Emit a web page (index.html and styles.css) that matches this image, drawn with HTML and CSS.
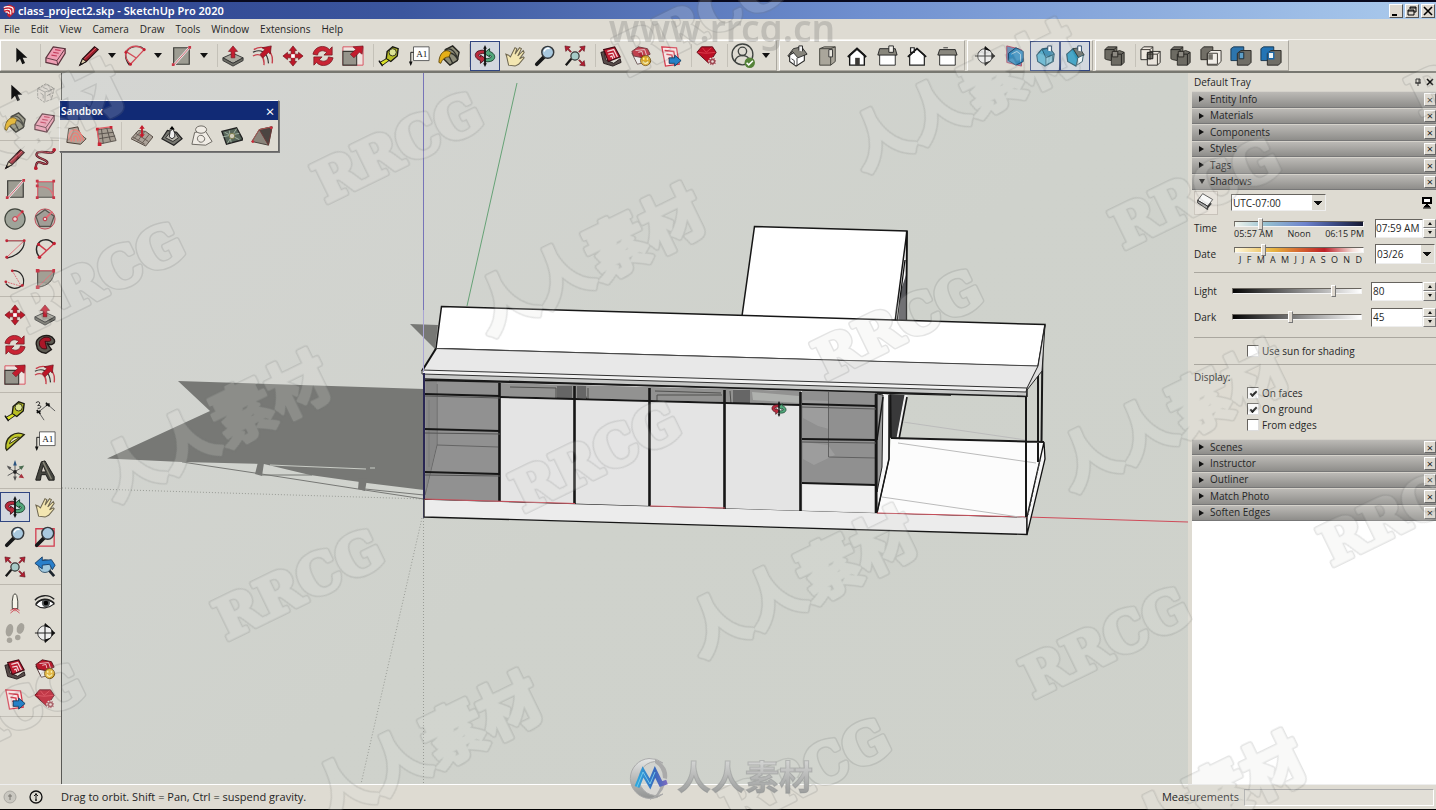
FILE: index.html
```html
<!DOCTYPE html>
<html lang="en">
<head>
<meta charset="utf-8">
<title>class_project2.skp - SketchUp Pro 2020</title>
<link rel="stylesheet" href="styles.css">
</head>
<body>
<svg class="defs" aria-hidden="true">
<defs>
<linearGradient id="silver" x1="0" y1="0" x2="0" y2="1"><stop offset="0" stop-color="#e6e7e6"/><stop offset=".5" stop-color="#b9bab9"/><stop offset="1" stop-color="#929493"/></linearGradient>
<linearGradient id="wave" x1="0" y1="0" x2="1" y2="0"><stop offset="0" stop-color="#2fa6dc"/><stop offset=".6" stop-color="#3868bd"/><stop offset="1" stop-color="#7b6bc0"/></linearGradient>
<linearGradient id="ground" x1="0" y1="0" x2="1" y2="1"><stop offset="0" stop-color="#d4d5d2"/><stop offset=".35" stop-color="#cfd2cc"/><stop offset="1" stop-color="#ced1ca"/></linearGradient>
</defs>
<symbol id="logo" viewBox="0 0 24 24"><path d="M3 5 13 1l9 4v9l-9 9-4-3v-4l-6-3z" fill="#c8202f"/><path d="M3 6c7-3 16-1 16 3v6M4 10c6-2 11-1 11 3v5M6 14c4-1 6 0 6 3" fill="none" stroke="#fff" stroke-width="2"/></symbol>
<symbol id="select" viewBox="0 0 24 24"><path d="M8 3v16l4-4 2.500 6 3-1.300-2.600-5.700H20z" fill="#111"/></symbol>
<symbol id="eraser" viewBox="0 0 24 24"><path d="M9 2 22 4v5l-8 13L1 19v-5z" fill="#ee9fb4" stroke="#59333c" stroke-width="1.300"/><path d="m1 14 12 3 9-13M13 17l1 5" fill="none" stroke="#59333c"/><path d="m11 5 6 1M9 8l6 1M7 11l6 1" stroke="#c23b5a" stroke-width="1.200"/></symbol>
<symbol id="pencil" viewBox="0 0 24 24"><path d="m2 22 3-7L18 2l4 3L9 18z" fill="#9c1d2b" stroke="#2b1013" stroke-width="1.300"/><path d="M7 15 20 3" stroke="#e0606a"/><path d="m2 22 3-7 4 3z" fill="#d8c6a5" stroke="#111"/><path d="m2 22 1-3 2 2z" fill="#111"/></symbol>
<symbol id="arc" viewBox="0 0 24 24"><path d="M2 9C5 1 17-1 22 5M2 9c-1 5 1 9 4 13" fill="none" stroke="#282828" stroke-width="1.500"/><path d="M2 7C8 0 15 0 22 5L7 21C3 17 1 12 2 7l11 7" fill="none" stroke="#d34b58" stroke-width="1.400"/><g fill="#c41f31"><circle cx="22" cy="5" r="1.700"/><circle cx="7" cy="21" r="1.700"/><circle cx="2" cy="8" r="1.500"/></g></symbol>
<symbol id="rect" viewBox="0 0 24 24"><path d="M4 3h17v18H4z" fill="#9d9c92" stroke="#3c3c38" stroke-width="1.300"/><path d="M4 22 22 2" stroke="#eee" stroke-width="2.500"/><path d="M4 22 22 2" stroke="#ce5460"/><path d="M20 1h3v3h-3zM2 20h3v3H2z" fill="#c73747"/></symbol>
<symbol id="rotrect" viewBox="0 0 24 24"><path d="M4 4h17v17H4z" fill="#a4a198" stroke="#494942"/><path d="M4 21V2M4 4h17v17M4 10c9-2 16 2 17 11" fill="none" stroke="#e56c77" stroke-width="1.200"/><path d="M2 2h3v3H2zM2 7h3v3H2zM20 2h3v3h-3zM2 20h3v3H2zM20 20h3v3h-3z" fill="#c73747"/></symbol>
<symbol id="circle" viewBox="0 0 24 24"><circle cx="12" cy="12" r="11" fill="#9fa49a" stroke="#42463e" stroke-width="1.300"/><path d="m12 12 8-8" stroke="#e36a73" stroke-width="2"/><circle cx="12" cy="12" r="2.500" fill="#f0d5d4" stroke="#bc2436"/><circle cx="20" cy="4" r="1.500" fill="#bc2436"/></symbol>
<symbol id="polygon" viewBox="0 0 24 24"><circle cx="12" cy="12" r="11" fill="#b9b4ac" stroke="#c34351"/><path d="m12 2 10 7-4 11H6L2 9z" fill="#a19e97" stroke="#55524d" stroke-width="1.300"/><path d="m12 12 8-8" stroke="#e36a73" stroke-width="2"/><circle cx="12" cy="12" r="2" fill="#f3d1d2" stroke="#bc2436"/></symbol>
<symbol id="arc3" viewBox="0 0 24 24"><path d="M3 3h19C23 13 13 20 3 22" fill="none" stroke="#222" stroke-width="1.300"/><path d="M3 3h19L3 21" fill="none" stroke="#df6973"/><g fill="#be2637"><circle cx="3" cy="3" r="1.600"/><circle cx="22" cy="3" r="1.600"/><circle cx="3" cy="21" r="1.600"/></g></symbol>
<symbol id="arc2" viewBox="0 0 24 24"><path d="M6 21C-1 12 4 2 13 2q5 0 9 5" fill="none" stroke="#282828" stroke-width="1.600"/><path d="M6 21 22 6M5 7l9 7" stroke="#ce3c4b" stroke-width="1.500"/><g fill="#c41f31"><circle cx="22" cy="6" r="1.900"/><circle cx="6" cy="21" r="1.900"/><circle cx="5" cy="7" r="1.700"/></g></symbol>
<symbol id="arccenter" viewBox="0 0 24 24"><path d="M9 3c8-1 14 6 12 15-8 7-15 4-19-1" fill="none" stroke="#252525" stroke-width="1.300"/><path d="m9 3 10 17L2 15" fill="none" stroke="#db6470" stroke-dasharray="2 1"/><g fill="#be2637"><circle cx="9" cy="3" r="1.500"/><circle cx="2" cy="15" r="1.500"/><circle cx="20" cy="19" r="1.500"/></g></symbol>
<symbol id="pie" viewBox="0 0 24 24"><path d="M4 3h18c0 10-7 17-18 18z" fill="#a29f94" stroke="#3a3935"/><path d="M3 3h19L4 21" fill="none" stroke="#e46e78"/><path d="M2 1h4v4H2zM20 1h3v4h-3zM2 19h4v4H2z" fill="#c73747"/></symbol>
<symbol id="freehand" viewBox="0 0 24 24"><path d="M2 22c0-13 9-2 12-5 4-4-14-6-11-11S22 9 22 2" fill="none" stroke="#4b1720" stroke-width="2.500"/><path d="M2 22c0-13 9-2 12-5 4-4-14-6-11-11S22 9 22 2" fill="none" stroke="#d45b68" stroke-width="1"/><circle cx="2" cy="22" r="2" fill="#bb1c2e"/><circle cx="22" cy="2" r="2" fill="#bb1c2e"/></symbol>
<symbol id="pushpull" viewBox="0 0 24 24"><path d="m1 14 11-5 11 5-11 6z" fill="#aaa99f" stroke="#333"/><path d="m1 14 11 6 11-6v3l-11 6-11-6z" fill="#6d6d65" stroke="#333"/><path d="m12 1 5 6h-3v7h-4V7H7z" fill="#c51e31" stroke="#791420" stroke-width=".7"/></symbol>
<symbol id="offset" viewBox="0 0 24 24"><path d="M2 5C12-1 24 5 22 20M1 12c8-4 13 1 12 10" fill="none" stroke="#c7404c" stroke-width="1.500"/><path d="M1 8c8-4 16-1 17 12" fill="none" stroke="#333" stroke-width="1.300"/><path d="m21 1-1 9-2-2-6 6-3-4 5-5-3-2z" fill="#bd1628" stroke="#641019" stroke-width=".7"/></symbol>
<symbol id="move" viewBox="0 0 24 24"><path d="m12 1 4 5h-2v4h4V8l5 4-5 4v-2h-4v4h2l-4 5-4-5h2v-4H6v2l-5-4 5-4v2h4V6H8z" fill="#bd1829" stroke="#6d111a" stroke-width=".7"/><path d="M10 10h4v4h-4z" fill="#fff"/></symbol>
<symbol id="rotate" viewBox="0 0 24 24"><path d="M1 10C3 1 14-1 19 5l3-3v9h-9l3-3C12 5 7 6 6 11zM23 14c-2 9-13 11-18 5l-3 3v-9h9l-3 3c4 3 9 2 10-3z" fill="#c92434" stroke="#721620" stroke-width=".8"/></symbol>
<symbol id="scale" viewBox="0 0 24 24"><path d="M1 2h22v20H1z" fill="#eee3df" stroke="#d84c5b"/><path d="M1 7h15v15H1z" fill="#96948b" stroke="#3b3934" stroke-width="1.200"/><path d="m23 1-1 9-3-2-6 6-4-4 6-5-3-3z" fill="#c21b2d" stroke="#5d131b" stroke-width=".6"/></symbol>
<symbol id="followme" viewBox="0 0 24 24"><path d="M3 13C-1 3 17-3 22 6c2 5-4 7-8 4l5 7-6 4C7 20 3 17 3 13z" fill="#5d5b52" stroke="#201c1a" stroke-width="1.500"/><path d="M6 12C4 5 14 1 18 5c2 4-4 3-6 3l2 8c-5 1-7-1-8-4z" fill="#aa1728" stroke="#3c0b11"/></symbol>
<symbol id="tape" viewBox="0 0 24 24"><path d="m10 7 6-5 6 2-1 8-7 6-5-3z" fill="#b8be25" stroke="#161611" stroke-width="1.500"/><circle cx="16" cy="8" r="4" fill="#dce394" stroke="#282815"/><path d="m9 15 3 2-7 5-3-3z" fill="#dae127" stroke="#151512"/><path d="m1 17 4 6" stroke="#111" stroke-width="1.500"/></symbol>
<symbol id="text" viewBox="0 0 24 24"><path d="M6 2h17v15H6z" fill="#fff" stroke="#555"/><text x="9" y="13" class="glyph-text">A1</text><path d="M6 8H3v13" fill="none" stroke="#111"/><path d="m1 18 2 5 2-5z" fill="#111"/></symbol>
<symbol id="paint" viewBox="0 0 24 24"><path d="m8 5 8-4 7 7-2 9-8 5-7-7z" fill="#8d8c78" stroke="#252520" stroke-width="1.500"/><path d="M8 5c7-3 11 3 14 11M7 15c4-9 10-7 14 0M9 6l7 14" fill="none" stroke="#2f302a" stroke-width="1.400"/><path d="M14 8C8 3 1 9 1 19l2 1c2-5 5-7 9-7z" fill="#e5af18" stroke="#644a0c"/></symbol>
<symbol id="orbit" viewBox="0 0 24 24"><path d="M12 6C0 4-2 14 7 17v3l6-5-6-4v2c-4-2-1-4 5-4z" fill="#ba2b3d" stroke="#44131b"/><path d="M12 18c12 2 14-8 5-11V4l-6 5 6 4v-2c4 2 1 4-5 4z" fill="#52a77b" stroke="#153d28"/><path d="m12 0 2 4h-1v16h1l-2 4-2-4h1V4h-1z" fill="#151515"/></symbol>
<symbol id="hand" viewBox="0 0 24 24"><path d="M5 22 3 13l-1-3 3 1 2 2 5-10 2 1-2 6 5-7 2 1-4 8 6-6 1 2-5 7 4-2 1 1-6 7-4 2z" fill="#f3e6b1" stroke="#6d654e" stroke-width="1.100"/></symbol>
<symbol id="zoom" viewBox="0 0 24 24"><path d="m3 21 8-8" stroke="#171819" stroke-width="4" stroke-linecap="round"/><circle cx="15" cy="8" r="6.500" fill="#a9c9df" stroke="#34383c" stroke-width="1.600"/><path d="M11 7c1-3 4-4 6-3" stroke="#fff" stroke-width="1.500" fill="none"/></symbol>
<symbol id="zoomwin" viewBox="0 0 24 24"><path d="M2 3h20v19H2z" fill="none" stroke="#d23b4d" stroke-width="1.400"/><path d="m3 21 8-8" stroke="#171819" stroke-width="4" stroke-linecap="round"/><circle cx="15" cy="8" r="6.500" fill="#a9c9df" stroke="#34383c" stroke-width="1.600"/></symbol>
<symbol id="extents" viewBox="0 0 24 24"><path d="m8 15-6 7" stroke="#161616" stroke-width="2.500"/><circle cx="12" cy="12" r="4.500" fill="#a7cbc7" stroke="#333" stroke-width="1.300"/><path d="m1 1 6 1-2 2 3 3-1 1-3-3-2 2zM23 1l-6 1 2 2-3 3 1 1 3-3 2 2zM23 23l-6-1 2-2-3-3 1-1 3 3 2-2z" fill="#b21c30" stroke="#541019" stroke-width=".6"/></symbol>
<symbol id="previous" viewBox="0 0 24 24"><path d="m15 14 7 8" stroke="#1d242c" stroke-width="3"/><circle cx="12" cy="11" r="7" fill="#a1c8dd" stroke="#31526c"/><path d="m1 8 8-7v4l10-1 4 6-3 5-3-6-8 1v4z" fill="#297fca" stroke="#193e68"/></symbol>
<symbol id="warehouse" viewBox="0 0 24 24"><path d="m1 8 4-1 1 9 9 4 7-5 1 4-9 4-10-3z" fill="#574b49" stroke="#211819"/><path d="m4 5 12-3 6 11-13 5z" fill="#bd1c30" stroke="#420c15" stroke-width="1.300"/><path d="m8 7 7-2 4 8M9 10l5-1 2 5M11 13l2-1 1 3" fill="none" stroke="#f4d9dc" stroke-width="1.300"/></symbol>
<symbol id="share" viewBox="0 0 24 24"><path d="m2 9 6 12 8-2-2-9z" fill="#eee" stroke="#4e3434"/><path d="m2 7 7-5 10 2 3 6-8 4L4 12z" fill="#b81a2c" stroke="#4e1118"/><path d="m6 6 10-1 2 6M9 8l4-1 1 4" fill="none" stroke="#eccbd0"/><circle cx="17" cy="17" r="5.500" fill="#e4ae22" stroke="#674708"/><path d="M14 18q3 4 6 0M15 14v2M19 14v2" fill="none" stroke="#fff6a9" stroke-width="1.500"/></symbol>
<symbol id="layout" viewBox="0 0 24 24"><path d="m2 2 16 1 3 18-15 2z" fill="#fae7e7" stroke="#d53a4c" stroke-width="1.400"/><path d="m5 6 10 1 2 10M7 10l6 1 1 7M9 14l2 1v5" fill="none" stroke="#d53a4c" stroke-width="1.600"/><path d="M10 14h6v-3l7 6-7 6v-3h-6z" fill="#2581c7" stroke="#123b5e"/></symbol>
<symbol id="gem" viewBox="0 0 24 24"><path d="m1 8 5-6h12l4 6-8 12z" fill="#b90f24" stroke="#5c0713"/><path d="m2 8 9 1 10-1M7 3l4 5 6-5" fill="none" stroke="#dd3d4d"/><circle cx="18" cy="18" r="4" fill="#9d4751" stroke="#e8dfda" stroke-dasharray="2 1" stroke-width="1.500"/><circle cx="18" cy="18" r="1.400" fill="#eadbd7"/></symbol>
<symbol id="user" viewBox="0 0 24 24"><g fill="none" stroke="#3f4340" stroke-width="1.300"><circle cx="11" cy="11" r="10"/><circle cx="11" cy="8" r="4"/><path d="M4 18c0-8 14-8 14 0"/></g><circle cx="18" cy="19" r="5" fill="#548238"/><path d="m15 19 2 2 4-4" fill="none" stroke="#fff" stroke-width="1.500"/></symbol>
<symbol id="iso" viewBox="0 0 24 24"><path d="M4 11v7l7 5 9-6v-7L9 8z" fill="#fff" stroke="#282827" stroke-width="1.200"/><path d="m2 12 6-8 9-2 6 8-10 4-6-7-4 6z" fill="#87857c" stroke="#292927"/><path d="M14 6V1h4v6" fill="#eee" stroke="#222"/><path d="M12 14v9M6 15l3 2v4" fill="none" stroke="#333"/></symbol>
<symbol id="topview" viewBox="0 0 24 24"><path d="m4 4 5-2h12v16l-5 4H4z" fill="#aaa69b" stroke="#403e39"/><path d="M4 4h12l5-2M16 4v18" fill="none" stroke="#403e39"/><path d="M14 5h4v8h-4z" fill="#e8e6de" stroke="#333"/></symbol>
<symbol id="front" viewBox="0 0 24 24"><path d="M4 11v11h16V11l-8-7z" fill="#fff" stroke="#171717" stroke-width="1.500"/><path d="m2 13 10-9 10 9" fill="none" stroke="#171717" stroke-width="2.200"/><path d="M10 14h5v8h-5z" fill="#3b3935"/></symbol>
<symbol id="right" viewBox="0 0 24 24"><path d="M4 10h17v12H4z" fill="#fff" stroke="#222"/><path d="m2 11 2-7h17l2 7z" fill="#88867c" stroke="#222"/><path d="M14 1h5v7h-5z" fill="#f1efe9" stroke="#222"/></symbol>
<symbol id="back" viewBox="0 0 24 24"><path d="M5 3h4v5H5zM4 11v11h16V11l-8-7z" fill="#fff" stroke="#222" stroke-width="1.300"/><path d="m2 13 10-9 10 9" fill="none" stroke="#191919" stroke-width="2"/></symbol>
<symbol id="left" viewBox="0 0 24 24"><path d="M4 10h17v12H4z" fill="#fff" stroke="#222"/><path d="m2 11 2-6h17l2 6z" fill="#89877e" stroke="#222"/><path d="M8 3h5" stroke="#333"/></symbol>
<symbol id="section" viewBox="0 0 24 24"><circle cx="12" cy="12" r="8" fill="#eee" stroke="#333"/><path d="M1 12h22M12 2v20" stroke="#222" stroke-width="1.200"/><path d="m12 1 7 6-7-2zM12 23l7-6-7 2zM19 8l4 4-4 4z" fill="#111"/></symbol>
<symbol id="sectionplane" viewBox="0 0 24 24"><path d="m3 1 16 4v18L3 19z" fill="#6b91b9" stroke="#b64c65"/><path d="m5 9 8-6 8 4v11l-8 4-8-5z" fill="#318cc2" stroke="#173f61"/><path d="m8 10 6-3 4 3v8" fill="none" stroke="#acd1e4"/></symbol>
<symbol id="cutfill" viewBox="0 0 24 24"><path d="m3 11 6-7 8-1 5 7-1 8-9 5-8-5z" fill="#58b3d3" stroke="#215268" stroke-width="1.200"/><path d="m9 5 8-2 5 7-9 4z" fill="#4795b9" stroke="#1c536c"/><path d="M15 6V1h4v6" fill="#fff" stroke="#246"/><path d="m13 14 7-3v7l-7 4z" fill="#8ecbe0" stroke="#265b70"/></symbol>
<symbol id="cutplane" viewBox="0 0 24 24"><path d="m3 10 7-6 6 9-3 10-9-5z" fill="#2499c3" stroke="#164b61" stroke-width="1.300"/><path d="m10 4 7-1 5 8-6 3z" fill="#777c78" stroke="#34423f"/><path d="m15 14 6-3-1 7-6 4z" fill="#eef5f7" stroke="#345c69"/><path d="M15 6V1h4v6" fill="#fff" stroke="#246"/></symbol>
<symbol id="shell" viewBox="0 0 24 24"><path d="m1 5 3-3h10v5l3-1 5 2v11l-3 3H8v-5l-5-1-2-1z" fill="#6d6b63" stroke="#2f2e2a"/><path d="M1 5h10v5M8 10h11v12M8 10v7M19 10l3-2M11 5l3-3" fill="none" stroke="#21201e"/><path d="M9 7h6v6H9z" fill="#8d8a82" stroke="#282622"/></symbol>
<symbol id="intersect" viewBox="0 0 24 24"><path d="m1 5 3-3h10v10l-3 4H1z" fill="#eee8df" stroke="#252422"/><path d="m8 10 3-3h11v12l-3 3H8z" fill="#eee8df" fill-opacity=".7" stroke="#252422"/><path d="M8 8h6v7H8z" fill="#76736c" stroke="#111"/><path d="M1 5h10v11M11 5l3-3M8 10h11v12M19 10l3-3" fill="none" stroke="#33302c"/></symbol>
<symbol id="subtract" viewBox="0 0 24 24"><path d="m1 5 3-3h10v12l-3 2H1z" fill="#726f67" stroke="#282622"/><path d="m8 9 4-3h11v12l-4 4H8z" fill="#f1eee8" stroke="#35322d"/><path d="M8 9h11v12M8 9v12h11" fill="none" stroke="#35322d"/><path d="M9 10h5v6H9z" fill="#716f68"/></symbol>
<symbol id="trim" viewBox="0 0 24 24"><path d="m1 4 3-2h11v13l-3 2H1z" fill="#2d75ad" stroke="#16334b"/><path d="m8 9 4-3h11v13l-3 3H8z" fill="#706e66" stroke="#292724"/><path d="M10 8h5v7h-5z" fill="#5e9ec6" stroke="#172b3a"/></symbol>
<symbol id="split" viewBox="0 0 24 24"><path d="m1 4 3-2h11v13l-3 2H1z" fill="#2374b5" stroke="#16334b"/><path d="m8 9 4-3h11v13l-3 3H8z" fill="#706e66" stroke="#292724"/><path d="M9 8h6v7H9z" fill="#eef5f7" stroke="#1a66a7" stroke-width="1.500"/></symbol>
<symbol id="component" viewBox="0 0 24 24"><path d="m4 7 9-5 9 5-3 12-8 3-7-5z" fill="#ddd8d0" stroke="#969590" stroke-dasharray="3 1"/><path d="m4 7 8 4 10-4M12 11v10M7 12l3 2v4M15 11l4-2M14 15l4-2M10 6l5 2" stroke="#969590" fill="none"/></symbol>
<symbol id="dimension" viewBox="0 0 24 24"><path d="m5 13 10-8M5 13l6 9M15 5l8 7" fill="none" stroke="#555"/><path d="m3 11 4 4M13 3l4 4M3 14l4-2M13 6l4-2" stroke="#111" stroke-width="1.800"/><path d="M2 3c4-3 6 1 2 3 5-1 4 4 0 3" fill="none" stroke="#222"/></symbol>
<symbol id="protractor" viewBox="0 0 24 24"><path d="M2 20C1 8 12 0 22 5L3 22z" fill="#bfc629" stroke="#272714" stroke-width="1.500"/><path d="M6 15c1-5 6-8 11-7z" fill="#eee8c6" stroke="#272714"/></symbol>
<symbol id="axes" viewBox="0 0 24 24"><path d="M12 3v18M4 8l16 10M4 17l16-9" stroke="#555"/><path d="m12 0-2 6h4z" fill="#2b5480"/><path d="m3 6 3 5 2-3zM12 23l-2-5h4z" fill="#555"/><path d="m22 20-6-1 3-4z" fill="#a8323e"/><path d="m22 6-6 1 3 4z" fill="#4b6c50"/><circle cx="12" cy="13" r="2" fill="#222"/></symbol>
<symbol id="text3d" viewBox="0 0 24 24"><path d="m2 21 6-19 4-1 10 17v4h-6l-3-6H8l-1 6H2z" fill="#464640" stroke="#171715"/><path d="m8 13 2-7 3 7z" fill="#ded6cd" stroke="#20201c"/><path d="m10 2 9 19" stroke="#8b8979" stroke-width="1.500"/></symbol>
<symbol id="camera" viewBox="0 0 24 24"><path d="m9 10 1-6q2-4 4 0l1 6v8H9z" fill="#f6f4e9" stroke="#393933"/><path d="M12 18v3M7 20l5-2 5 2M7 23l5-4 5 4" fill="none" stroke="#cf4e59"/></symbol>
<symbol id="eye" viewBox="0 0 24 24"><path d="M2 14C6 7 16 6 22 13c-6 5-14 6-20 1z" fill="#fff" stroke="#222" stroke-width="1.300"/><circle cx="13" cy="12" r="4.500" fill="#55595a"/><circle cx="13" cy="12" r="2.500"/><path d="M1 9c5-6 15-7 21-1M2 13c5-6 13-7 20-1" fill="none" stroke="#222" stroke-width="1.600"/></symbol>
<symbol id="walk" viewBox="0 0 24 24"><g fill="#a6a39b"><ellipse cx="6" cy="9" rx="4" ry="7" transform="rotate(12 6 9)"/><ellipse cx="6" cy="20" rx="3" ry="3"/><ellipse cx="18" cy="7" rx="4" ry="6" transform="rotate(18 18 7)"/><ellipse cx="15" cy="17" rx="3" ry="3"/></g></symbol>
<symbol id="tosurface" viewBox="0 0 24 24"><path d="m4 4 10-2c2 8 4 9 9 13l-6 6-15-2z" fill="#b3a498" stroke="#42372e"/><g fill="none" stroke="#f07f78" stroke-width="1.500"><path d="M4 16C3 2 17 1 20 17M7 18C4 6 16 5 17 18M10 18c-2-8 4-8 4 0"/></g></symbol>
<symbol id="scratch" viewBox="0 0 24 24"><path d="m3 5 15-2 5 14-19 4z" fill="#a59d92" stroke="#57504a"/><path d="m7 4 2 16M13 4l4 14M3 10l17-2M4 15l18-3" stroke="#554f49"/><path d="M2 4 17 2M2 4l3 17" stroke="#e15e66" stroke-width="1.400"/><path d="M1 3h3v3H1zM16 1h3v3h-3zM3 19h4v4H3z" fill="#cd2334"/></symbol>
<symbol id="smoove" viewBox="0 0 24 24"><path d="m0 15 8-9 8 1 8 6-8 10z" fill="#aaa198" stroke="#51473f"/><path d="m3 15 8-8M7 18l8-11M12 20l8-10M5 9l14 9M2 13l13 8" stroke="#625850"/><path d="m12 0 3 4h-2v6h2l-3 4-3-4h2V4H9z" fill="#c31c2d"/></symbol>
<symbol id="stamp" viewBox="0 0 24 24"><path d="m1 15 6-9 10 2 6 7-9 7z" fill="#777770" stroke="#222" stroke-width="1.300"/><path d="m5 14 4-5h7l3 5-6 4z" fill="#b8b6ad" stroke="#282828"/><path d="m9 13 1-6 3-3 2 5v4l-3 2z" fill="#eee" stroke="#222"/><path d="m12 1 3 4H9z"/></symbol>
<symbol id="drape" viewBox="0 0 24 24"><g fill="#f0ece5" stroke="#64605a"><path d="m4 8 12-1 7 11-7 4-15-1z"/><ellipse cx="11" cy="5" rx="6" ry="4"/><path d="M7 15c0-5 7-5 8 0 0 4-7 6-8 0z"/></g></symbol>
<symbol id="detail" viewBox="0 0 24 24"><path d="m1 7 16-4 7 13-18 5z" fill="#57665a" stroke="#222" stroke-width="1.500"/><path d="m4 8 16 8M17 4 7 20M9 6l2 13M2 13l18-4" stroke="#a5b5a4"/><circle cx="12" cy="12" r="3" fill="#cfcbbb" stroke="#774"/></symbol>
<symbol id="flip" viewBox="0 0 24 24"><path d="m1 18 8-13 14-3-4 20z" fill="#8a847a" stroke="#443e38"/><path d="m9 5 10 17 4-20z" fill="#4b4541" stroke="#6f3837"/><path d="m1 18 8-13 14-3" fill="none" stroke="#b05a55"/><circle cx="2" cy="18" r="1.500" fill="#c92c3a"/><circle cx="22" cy="3" r="1.500" fill="#c92c3a"/></symbol>
</svg>

<div class="app">
<header class="titlebar"><svg class="app-logo"><use href="#logo"/></svg><h1>class_project2.skp - SketchUp Pro 2020</h1>
<div class="window-controls"><button aria-label="Minimize"><svg viewBox="0 0 10 10"><path d="M1 9h5" stroke="#000" stroke-width="2"/></svg></button><button aria-label="Restore"><svg viewBox="0 0 10 10"><path d="M3 1h6v5H7M3 3V1M1 4h6v5H1zM1 5h6M3 2h6" fill="none" stroke="#000"/></svg></button><button aria-label="Close"><svg viewBox="0 0 10 10"><path d="m1 1 8 8M9 1 1 9" stroke="#000" stroke-width="1.600"/></svg></button></div></header>
<nav class="menu" aria-label="Menu"><button>File</button><button>Edit</button><button>View</button><button>Camera</button><button>Draw</button><button>Tools</button><button>Window</button><button>Extensions</button><button>Help</button></nav>
<div class="toolbar" role="toolbar" aria-label="Getting started">
<div class="band">
<div class="group"><button class="tool" aria-label="Select"><svg><use href="#select"/></svg></button></div>
<div class="group drawing"><button class="tool" aria-label="Eraser"><svg><use href="#eraser"/></svg></button><div class="split"><button class="tool" aria-label="Line"><svg><use href="#pencil"/></svg></button><button class="drop" aria-label="Line options"></button></div><div class="split"><button class="tool" aria-label="Arc"><svg><use href="#arc"/></svg></button><button class="drop" aria-label="Arc options"></button></div><div class="split"><button class="tool" aria-label="Rectangle"><svg><use href="#rect"/></svg></button><button class="drop" aria-label="Shape options"></button></div></div>
<div class="group"><button class="tool" aria-label="Push/Pull"><svg><use href="#pushpull"/></svg></button><button class="tool" aria-label="Offset"><svg><use href="#offset"/></svg></button><button class="tool" aria-label="Move"><svg><use href="#move"/></svg></button><button class="tool" aria-label="Rotate"><svg><use href="#rotate"/></svg></button><button class="tool" aria-label="Scale"><svg><use href="#scale"/></svg></button></div>
<div class="group"><button class="tool" aria-label="Tape measure"><svg><use href="#tape"/></svg></button><button class="tool" aria-label="Text"><svg><use href="#text"/></svg></button><button class="tool" aria-label="Paint bucket"><svg><use href="#paint"/></svg></button></div>
<div class="group"><button class="tool active" aria-label="Orbit"><svg><use href="#orbit"/></svg></button><button class="tool" aria-label="Pan"><svg><use href="#hand"/></svg></button><button class="tool" aria-label="Zoom"><svg><use href="#zoom"/></svg></button><button class="tool" aria-label="Zoom extents"><svg><use href="#extents"/></svg></button></div>
<div class="group"><button class="tool" aria-label="3D Warehouse"><svg><use href="#warehouse"/></svg></button><button class="tool" aria-label="Share model"><svg><use href="#share"/></svg></button><button class="tool" aria-label="Send to LayOut"><svg><use href="#layout"/></svg></button></div>
<div class="group"><button class="tool" aria-label="Extension Warehouse"><svg><use href="#gem"/></svg></button></div>
<div class="group"><div class="split"><button class="tool" aria-label="Account"><svg class="large"><use href="#user"/></svg></button><button class="drop" aria-label="Account options"></button></div></div>
</div>
<div class="band"><div class="group"><button class="tool" aria-label="Iso"><svg><use href="#iso"/></svg></button><button class="tool" aria-label="Top"><svg><use href="#topview"/></svg></button><button class="tool" aria-label="Front"><svg><use href="#front"/></svg></button><button class="tool" aria-label="Right"><svg><use href="#right"/></svg></button><button class="tool" aria-label="Back"><svg><use href="#back"/></svg></button><button class="tool" aria-label="Left"><svg><use href="#left"/></svg></button></div></div>
<div class="band"><div class="group"><button class="tool" aria-label="Section plane"><svg><use href="#section"/></svg></button><button class="tool" aria-label="Display section planes"><svg><use href="#sectionplane"/></svg></button><button class="tool active" aria-label="Display section cuts"><svg><use href="#cutfill"/></svg></button><button class="tool active" aria-label="Display section fill"><svg><use href="#cutplane"/></svg></button></div></div>
<div class="band"><div class="group"><button class="tool" aria-label="Outer shell"><svg><use href="#shell"/></svg></button></div><div class="group"><button class="tool" aria-label="Intersect"><svg><use href="#intersect"/></svg></button><button class="tool" aria-label="Union"><svg><use href="#shell"/></svg></button><button class="tool" aria-label="Subtract"><svg><use href="#subtract"/></svg></button><button class="tool" aria-label="Trim"><svg><use href="#trim"/></svg></button><button class="tool" aria-label="Split"><svg><use href="#split"/></svg></button></div></div>
</div>

<div class="workspace">
<aside class="toolset" aria-label="Large tool set">
<div class="tool-group"><button class="tool" aria-label="Select"><svg><use href="#select"/></svg></button><button class="tool" aria-label="Make component"><svg><use href="#component"/></svg></button><button class="tool" aria-label="Paint"><svg><use href="#paint"/></svg></button><button class="tool" aria-label="Eraser"><svg><use href="#eraser"/></svg></button></div>
<div class="tool-group"><button class="tool" aria-label="Line"><svg><use href="#pencil"/></svg></button><button class="tool" aria-label="Freehand"><svg><use href="#freehand"/></svg></button><button class="tool" aria-label="Rectangle"><svg><use href="#rect"/></svg></button><button class="tool" aria-label="Rotated rectangle"><svg><use href="#rotrect"/></svg></button><button class="tool" aria-label="Circle"><svg><use href="#circle"/></svg></button><button class="tool" aria-label="Polygon"><svg><use href="#polygon"/></svg></button><button class="tool" aria-label="Three point arc"><svg><use href="#arc3"/></svg></button><button class="tool" aria-label="Two point arc"><svg><use href="#arc2"/></svg></button><button class="tool" aria-label="Arc"><svg><use href="#arccenter"/></svg></button><button class="tool" aria-label="Pie"><svg><use href="#pie"/></svg></button></div>
<div class="tool-group"><button class="tool" aria-label="Move"><svg><use href="#move"/></svg></button><button class="tool" aria-label="Push/Pull"><svg><use href="#pushpull"/></svg></button><button class="tool" aria-label="Rotate"><svg><use href="#rotate"/></svg></button><button class="tool" aria-label="Follow me"><svg><use href="#followme"/></svg></button><button class="tool" aria-label="Scale"><svg><use href="#scale"/></svg></button><button class="tool" aria-label="Offset"><svg><use href="#offset"/></svg></button></div>
<div class="tool-group"><button class="tool" aria-label="Tape measure"><svg><use href="#tape"/></svg></button><button class="tool" aria-label="Dimension"><svg><use href="#dimension"/></svg></button><button class="tool" aria-label="Protractor"><svg><use href="#protractor"/></svg></button><button class="tool" aria-label="Text"><svg><use href="#text"/></svg></button><button class="tool" aria-label="Axes"><svg><use href="#axes"/></svg></button><button class="tool" aria-label="3D text"><svg><use href="#text3d"/></svg></button></div>
<div class="tool-group"><button class="tool active" aria-label="Orbit"><svg><use href="#orbit"/></svg></button><button class="tool" aria-label="Pan"><svg><use href="#hand"/></svg></button><button class="tool" aria-label="Zoom"><svg><use href="#zoom"/></svg></button><button class="tool" aria-label="Zoom window"><svg><use href="#zoomwin"/></svg></button><button class="tool" aria-label="Zoom extents"><svg><use href="#extents"/></svg></button><button class="tool" aria-label="Previous"><svg><use href="#previous"/></svg></button></div>
<div class="tool-group"><button class="tool" aria-label="Position camera"><svg><use href="#camera"/></svg></button><button class="tool" aria-label="Look around"><svg><use href="#eye"/></svg></button><button class="tool" aria-label="Walk"><svg><use href="#walk"/></svg></button><button class="tool" aria-label="Section plane"><svg><use href="#section"/></svg></button></div>
<div class="tool-group"><button class="tool" aria-label="3D Warehouse"><svg><use href="#warehouse"/></svg></button><button class="tool" aria-label="Share model"><svg><use href="#share"/></svg></button><button class="tool" aria-label="Send to LayOut"><svg><use href="#layout"/></svg></button><button class="tool" aria-label="Extension Warehouse"><svg><use href="#gem"/></svg></button></div>
</aside>

<main class="viewport">
<svg class="scene" viewBox="62 73 1126 711" preserveAspectRatio="xMinYMin slice" role="img" aria-label="House model">
<path d="M62 73h1600v1200H62z" fill="url(#ground)"/>
<g fill="none" stroke-width="1"><path d="M423.500 73v445" stroke="#7774b8"/><path d="m517 83-50 223" stroke="#66a276"/><path d="m62 488 362 11M422 518l-61 266M423.500 518v266" stroke="#999c96" stroke-dasharray="1 2"/><path d="m1027 517 161 5" stroke="#cf4b59"/></g>
<g fill="#777875"><path d="m178 381 246 8v101l-57-7-57-8-46-11-82-2-75-3.500L210 411zM410 324l28 1-3 24z"/><path d="m258 462 6 1-2 13-7-2zM359 478l8 1-2 12-7-2z"/></g>
<path d="m182 462 73 11 103 16 66 10M262 475h50M365 489l59 6" fill="none" stroke="#777875"/>
<path d="m270 465 96 4M370 468h5" stroke="#c8cbc5" stroke-width="1.200"/>
<!-- rear volume -->
<path d="m754.500 226.500 152.500 4.500-1 91-164-6z" fill="#fff" stroke="#161616" stroke-width="1.500"/>
<path d="m907 231-12 91 11 1z" fill="#f8f8f8" stroke="#161616" stroke-width="1.500"/><path d="m901 290 5-15v49h-8z" fill="#55565a"/><path d="m905 260-8 62M906.500 231v92" stroke="#111" stroke-width="1.300"/>
<!-- plinth and floor -->
<path d="m424 499 603 18v17.500L424 517z" fill="#ececec" stroke="#161616" stroke-width="1.300"/>
<path d="m891 438 153 4-18 75-149-4 12-54z" fill="#fcfcfc"/>
<path d="m1044 442 1 17-18 75.500V517z" fill="#f7f7f7" stroke="#111" stroke-width="1.300"/>
<path d="m1040 460-12 55" stroke="#444" stroke-dasharray="3 2"/>
<!-- facade -->
<path d="m424 379 452 13v121L424 499z" fill="#e4e4e4"/>
<path d="m424 380 76 2v120l-76-3z" fill="#919191"/><path d="m500 383 301 8v13l-301-8z" fill="#929291"/>
<path d="M437 384v61l-12 50M437 445l61 2M429 400v67" fill="none" stroke="#656565"/>
<path d="m426 380 11 1v62l-11 49" fill="#838383" opacity=".7"/>
<path d="m802 391 74 2v92l-74-2z" fill="#909090"/><path d="m803 400 26 1v28l-11-3-15-8zM803 442l25 3 7 10-21 10-11-6z" fill="#aaa" opacity=".5"/>
<path d="M828.500 392v65l48 1" fill="none" stroke="#616161"/>
<path d="m803 484 73 1v27l-73-2z" fill="#eee"/>
<path d="m510 387 46 1v11M560 388v10M583 388l4 12M588 388v12M655 391l66 2M657 395h65M657 395v7M730 391l1 13M735 392l2 12" fill="none" stroke="#50504e"/>
<path d="M557 386h15v12h-15zM577 386h9v12h-9zM733 390h17v13h-17z" fill="#666"/>
<path d="m752 392 47 4v7l-46-3z" fill="#afb1ae"/>
<path d="m876 393 14 1-1 65-12 54z" fill="#f7f7f7" stroke="#222"/>
<path d="m877 394 6 1-1 72-5 25z" fill="#999" stroke="#222"/><path d="m877 440 6-43M889 395v64l-12 54" fill="none" stroke="#171717" stroke-width="1.500"/>
<g stroke="#161616" stroke-width="2"><path d="m424 380 603 14M424 499V379" /><path d="M499.500 383v118M574.500 386v118M649.500 388v118M724.500 390v119M800.500 392v119M876 394v119" stroke-width="2.600"/><path d="m424 394 76 2M424 429l76 2M424 472l76 2M500 397l301 8M802 404l74 2M802 439l74 1M802 483l74 2"/><path d="m425 396 75 2M425 433l75 1M425 475l75 1M802 407l74 2M802 442l74 1" stroke="#555" stroke-width="1"/></g>
<path d="m424 499 151 4.500M650 506l75 2M877 513l150 4" stroke="#c74c58"/>
<!-- carport -->
<path d="m890 394 15 1-8 43-7-1z" fill="#39393a"/><path d="m906 395-8 43" stroke="#f1f1f1" stroke-width="3"/><path d="m890.500 395 .500 43M907 397l-8 42M877 393l74 2" stroke="#161616" stroke-width="1.600" fill="none"/>
<path d="m903 422 123 18M898 443l138 20M882 497l144 21" stroke="#bbb" fill="none"/><path d="m891 438 153 4M1026 388v129M1038 372v90M1042.500 345l-1 97" stroke="#191919" stroke-width="2" fill="none"/>
<!-- roof -->
<path d="m441.500 306.500 603.500 18-7 42-602-18z" fill="#fff" stroke="#161616" stroke-width="1.500"/>
<path d="m436 348.500 602 17.500-11 22-605-17z" fill="#e8e8e8"/><path d="m436 348.500-14 22.500" stroke="#111" stroke-width="2"/><path d="m436 348.500 602 17.500" stroke="#444"/>
<path d="m422 370 605 18-1 9-603-18z" fill="#c8c9c8"/><path d="m422 370 605 18-1 4-604-18z" fill="#f1f1f1" stroke="#333"/><path d="m424 379 603 17.500" stroke="#191919" stroke-width="1.700"/><path d="M1027 397v-9l11-22 7-41-3 46-15 19z" fill="#ddd" stroke="#222"/><path d="M424 373v126" stroke="#292653" stroke-width="2"/><path d="M423.500 310v62" stroke="#aaa6d4"/>
</svg>
<svg class="orbit-cursor" aria-hidden="true"><use href="#orbit"/></svg>
<section class="sandbox" aria-label="Sandbox"><header><h2>Sandbox</h2><button aria-label="Close Sandbox">×</button></header><div class="sandbox-tools"><button class="tool" aria-label="From contours"><svg><use href="#tosurface"/></svg></button><button class="tool" aria-label="From scratch"><svg><use href="#scratch"/></svg></button><span class="sandbox-divider"></span><button class="tool" aria-label="Smoove"><svg><use href="#smoove"/></svg></button><button class="tool" aria-label="Stamp"><svg><use href="#stamp"/></svg></button><button class="tool" aria-label="Drape"><svg><use href="#drape"/></svg></button><button class="tool" aria-label="Add detail"><svg><use href="#detail"/></svg></button><button class="tool" aria-label="Flip edge"><svg><use href="#flip"/></svg></button></div></section>
</main>

<aside class="tray">
<header class="tray-title"><h2>Default Tray</h2><div><button aria-label="Pin"><svg viewBox="0 0 10 10"><path d="M3 2h4v4H3zM6 2v4M2 6h6M5 6v3" fill="none" stroke="#111"/></svg></button><button aria-label="Close tray"><svg viewBox="0 0 10 10"><path d="m2 2 6 6M8 2 2 8" stroke="#111" stroke-width="1.500"/></svg></button></div></header>
<div class="sections upper">
<div class="section"><button class="section-name">Entity Info</button><button class="close" aria-label="Close Entity Info">×</button></div>
<div class="section"><button class="section-name">Materials</button><button class="close" aria-label="Close Materials">×</button></div>
<div class="section"><button class="section-name">Components</button><button class="close" aria-label="Close Components">×</button></div>
<div class="section"><button class="section-name">Styles</button><button class="close" aria-label="Close Styles">×</button></div>
<div class="section"><button class="section-name">Tags</button><button class="close" aria-label="Close Tags">×</button></div>
<div class="section"><button class="section-name open" aria-expanded="true">Shadows</button><button class="close" aria-label="Close Shadows">×</button></div>
</div>
<div class="shadow-panel">
<div class="zone-row"><button class="shadow-toggle" aria-label="Show shadows"><svg viewBox="0 0 24 24"><path d="m8 5 11 9-6 7-11-9z" fill="#333"/><path d="m8 2 12 7-6 8L2 10z" fill="#fff" stroke="#222"/><path d="M2 10v3l12 8v-4z" fill="#aaa" stroke="#222"/></svg></button><select aria-label="Time zone"><option>UTC-07:00</option></select><button class="details-toggle" aria-label="Show details"><svg viewBox="0 0 12 12"><path d="M2 1h8v5H2z" fill="#fff" stroke="#000" stroke-width="2"/><path d="m6 7 3 3H3zM2 11h8" stroke="#000"/></svg></button></div>
<div class="time-row"><label for="time">Time</label><div class="range"><input class="time-range" id="time" type="range" min="0" max="100" value="19"><div class="ticks"><span>05:57 AM</span><span>Noon</span><span>06:15 PM</span></div></div><div class="spin"><input aria-label="Shadow time" value="07:59 AM"><div><button aria-label="Later"></button><button class="down" aria-label="Earlier"></button></div></div></div>
<div class="time-row"><label for="date">Date</label><div class="range"><input class="date-range" id="date" type="range" min="0" max="100" value="21"><div class="ticks months"><span>J</span><span>F</span><span>M</span><span>A</span><span>M</span><span>J</span><span>J</span><span>A</span><span>S</span><span>O</span><span>N</span><span>D</span></div></div><select aria-label="Shadow date"><option>03/26</option></select></div>
<div class="levels"><div class="level-row"><label for="light">Light</label><input id="light" type="range" value="80"><div class="spin"><input aria-label="Light value" value="80"><div><button aria-label="Increase light"></button><button class="down" aria-label="Decrease light"></button></div></div></div>
<div class="level-row"><label for="dark">Dark</label><input id="dark" type="range" value="45"><div class="spin"><input aria-label="Dark value" value="45"><div><button aria-label="Increase dark"></button><button class="down" aria-label="Decrease dark"></button></div></div></div></div>
<div class="sun"><label><input type="checkbox">Use sun for shading</label></div>
<fieldset class="display"><legend>Display:</legend><label><input type="checkbox" checked>On faces</label><label><input type="checkbox" checked>On ground</label><label><input type="checkbox">From edges</label></fieldset>
</div>
<div class="sections lower">
<div class="section"><button class="section-name">Scenes</button><button class="close" aria-label="Close Scenes">×</button></div>
<div class="section"><button class="section-name">Instructor</button><button class="close" aria-label="Close Instructor">×</button></div>
<div class="section"><button class="section-name">Outliner</button><button class="close" aria-label="Close Outliner">×</button></div>
<div class="section"><button class="section-name">Match Photo</button><button class="close" aria-label="Close Match Photo">×</button></div>
<div class="section"><button class="section-name">Soften Edges</button><button class="close" aria-label="Close Soften Edges">×</button></div>
</div>
</aside>
</div>
<footer class="status"><svg viewBox="0 0 14 14"><circle cx="7" cy="7" r="6" fill="#c9c7c0" stroke="#aaa8a2"/><path d="M7 4v6M5 6h4" stroke="#77756f"/></svg><svg viewBox="0 0 14 14"><circle cx="7" cy="7" r="6" fill="none" stroke="#111" stroke-width="1.300"/><path d="M7 3v8M5 6l2-2 2 2M6 10h2" fill="none" stroke="#111"/></svg><p>Drag to orbit. Shift = Pan, Ctrl = suspend gravity.</p><label for="measurement">Measurements</label><input id="measurement"></footer>
</div>

<svg class="watermarks" viewBox="0 0 1436 810" preserveAspectRatio="xMidYMid slice" aria-hidden="true">
<g class="faint">
<g id="marks">
<g class="latin"><text transform="translate(398 147) rotate(-26)">RRCG</text><text transform="translate(100 277) rotate(-26)">RRCG</text><text transform="translate(596 456) rotate(-26)">RRCG</text><text transform="translate(898 324) rotate(-26)">RRCG</text><text transform="translate(1196 193) rotate(-26)">RRCG</text><text transform="translate(299 584) rotate(-26)">RRCG</text><text transform="translate(1106 642) rotate(-26)">RRCG</text><text transform="translate(806 773) rotate(-26)">RRCG</text><text transform="translate(1404 510) rotate(-26)">RRCG</text><text transform="translate(0 718) rotate(-26)">RRCG</text><text transform="translate(700 20) rotate(-26)">RRCG</text><text transform="translate(1492 60) rotate(-26)">RRCG</text></g>
<g class="cjk"><text transform="translate(587 257) rotate(-26)">人人素材</text><text transform="translate(962 93) rotate(-26)">人人素材</text><text transform="translate(1170 413) rotate(-26)">人人素材</text><text transform="translate(799 579) rotate(-26)">人人素材</text><text transform="translate(213 423) rotate(-26)">人人素材</text><text transform="translate(424 744) rotate(-26)">人人素材</text><text transform="translate(6 132) rotate(-26)">人人素材</text><text transform="translate(1188 804) rotate(-26)">人人素材</text></g>
</g>
<use href="#marks" class="face"/>
</g>
<text x="722" y="42" class="site">www.rrcg.cn</text>
<circle cx="649" cy="778" r="18" fill="#d3d4d4" opacity=".55"/><path d="M663 763a20 20 0 1 0 0 31 17 17 0 1 1 0-31z" fill="url(#silver)" stroke="#aaa"/><path d="M655 759q14 7 12 20l-4-1q0-10-8-15zM665 784q-4 13-16 16 10-5 12-16z" fill="#aaa"/><path d="m637 787 6-15 7 12 5-12 6 12 6-2" fill="none" stroke="url(#wave)" stroke-width="5"/><path d="m637 787 6-15 7 12 5-12" fill="none" stroke="#72c8ec"/>
<text x="677" y="790" class="brand">人人素材</text>
</svg>
</body>
</html>
```
FILE: styles.css
```css
*, *::before, *::after { box-sizing: border-box; }
body { margin: 0; background: #dedbd2; color: #252525; font: 11px/14px "Open Sans", "Noto Sans", sans-serif; }
button, input, select { font: inherit; color: inherit; }
button { padding: 0; border: 0; background: transparent; }
h1, h2, p { margin: 0; font: inherit; }
.defs { position: absolute; width: 0; height: 0; }
.app { height: 100vh; display: flex; flex-direction: column; overflow: hidden; border-top: 2px solid #08091e; border-bottom: 1px solid #000; }
.titlebar { height: 17px; flex: none; display: flex; align-items: center; gap: 2px; padding-left: 2px; color: #fff; background: linear-gradient(90deg, #2c418e 0%, #3b569e 28%, #6f8fcf 60%, #abcbed 100%); }
.app-logo { width: 14px; height: 14px; }
.titlebar h1 { font: 600 11px/16px "Noto Sans", sans-serif; }
.window-controls { margin-left: auto; display: flex; gap: 2px; padding-right: 1px; }
.window-controls button { width: 14px; height: 14px; display: grid; place-items: center; background: #ded9d0; border: 1px solid; border-color: #fff #555 #555 #fff; }
.window-controls svg { width: 10px; height: 10px; }
.menu { height: 20px; flex: none; display: flex; align-items: center; gap: 11px; padding-left: 4px; font-size: 10px; }
.toolbar { height: 34px; flex: none; display: flex; gap: 2px; border-top: 1px solid #f4f2ec; border-bottom: 2px solid #777770; }
.band { display: flex; gap: 6px; padding: 0 2px; border: 1px solid; border-color: #fff #aaa79f #aaa79f #fff; }
.band:first-child { padding-left: 4px; }
.band:last-child { padding-left: 4px; }
.group { flex: none; display: flex; align-items: center; }
.group + .group { box-shadow: -4px 0 0 -3px #c4c1b8; }
.drawing > .tool { margin-right: 3px; }
.split { display: flex; }
.drop { width: 16px; display: grid; place-items: center; }
.drop::after { content: ""; border: 4px solid transparent; border-top: 5px solid #111; border-bottom: 0; }
.tool { width: 30px; height: 30px; flex: none; display: grid; place-items: center; }
.tool svg { width: 22px; height: 22px; }
.tool svg.large { width: 25px; height: 25px; }
.tool.active { background: #d3d8df; border: 1px solid #304580; }
.glyph-text { font: 10px "Liberation Serif", serif; fill: #111; }
.workspace { flex: 1; min-height: 0; display: grid; grid-template-columns: 62px minmax(0, 1fr) 248px; }
.toolset { padding-top: 5px; border-right: 1px solid #595955; }
.tool-group { display: grid; grid-template-columns: 30px 30px; border-bottom: 1px solid #bcb8af; padding-bottom: 2px; margin-bottom: 3px; }
.viewport { position: relative; min-width: 0; background: #ced1ca; border-bottom: 1px solid #fff; }
.scene { display: block; width: 100%; height: 100%; }
.orbit-cursor { position: absolute; left: 709px; top: 328px; width: 16px; height: 16px; }
.sandbox { position: absolute; left: -3px; top: 27px; width: 220px; background: #dedbd2; border: 1px solid; border-color: #f6f6f6 #666 #666 #eee; box-shadow: 1px 1px #777; }
.sandbox header { height: 19px; display: flex; align-items: center; justify-content: space-between; padding: 0 2px 0 1px; color: #fff; background: #112a75; }
.sandbox h2 { font: 600 10px/18px "Noto Sans", sans-serif; }
.sandbox header button { width: 12px; font-size: 15px; }
.sandbox-tools { height: 31px; display: flex; align-items: center; padding-left: 1px; }
.sandbox-divider { width: 6px; height: 28px; border-left: 1px solid #c7c3ba; }
.tray { background: #fff; border-left: 4px solid #dedbd2; min-width: 0; }
.tray-title { height: 18px; display: flex; align-items: center; justify-content: space-between; padding-left: 2px; background: #dedbd2; font-size: 10px; }
.tray-title div { display: flex; gap: 2px; padding-right: 1px; }
.tray-title button { width: 10px; height: 10px; }
.tray-title svg { display: block; width: 10px; height: 10px; }
.sections { display: grid; grid-auto-rows: 1fr; }
.upper { height: 99px; }
.lower { height: 82px; }
.section { display: flex; min-height: 0; background: linear-gradient(#bcbab6, #8e8d8a); border-top: 1px solid #d5d2cb; border-bottom: 1px solid #777; }
.section-name { flex: 1; display: flex; align-items: center; gap: 6px; padding-left: 7px; font-size: 10px; line-height: 13px; text-align: left; }
.section-name::before { content: ""; width: 5px; height: 6px; border-left: 5px solid #111; border-top: 3px solid transparent; border-bottom: 3px solid transparent; }
.section-name.open::before { width: 6px; height: 5px; margin-right: -1px; border-left: 3px solid transparent; border-right: 3px solid transparent; border-top: 5px solid #111; border-bottom: 0; }
.close { width: 12px; margin: 1px 0; background: #dcd8cf; border: 1px solid; border-color: #fff #666 #666 #fff; font-size: 11px; line-height: 9px; }
.shadow-panel { background: #dedbd2; font-size: 10px; padding: 0 0 6px 2px; }
.zone-row { height: 25px; display: grid; grid-template-columns: 37px 95px 1fr; align-items: center; }
.shadow-toggle { width: 24px; height: 24px; border: 1px solid #c8c2ba; background: #e8e3db; }
.shadow-toggle svg { width: 20px; height: 20px; }
select { appearance: none; height: 17px; border: 1px solid; border-color: #66635e #eee #eee #66635e; border-radius: 0; padding: 0 1px; background: linear-gradient(to bottom right, #111 50%, transparent 52%) no-repeat right 3px center / 4px 4px, linear-gradient(to bottom left, #111 50%, transparent 52%) no-repeat right 7px center / 4px 4px, linear-gradient(90deg, #fff 1px, #dedbd2 1px) no-repeat right / 14px 100%, #fff; line-height: 14px; }
.details-toggle { justify-self: end; width: 12px; height: 12px; margin-right: 3px; }
.details-toggle svg { display: block; width: 12px; height: 12px; }
.time-row { height: 26px; display: grid; grid-template-columns: 40px minmax(0, 1fr) 61px; align-items: center; }
.range { min-width: 0; width: 130px; height: 20px; }
input[type="range"] { appearance: none; display: block; width: 130px; height: 14px; margin: 0; background: transparent; }
input[type="range"]::-webkit-slider-runnable-track { height: 6px; border: 1px solid; border-color: #68645e #f4f4f4 #f4f4f4 #77736b; background: linear-gradient(90deg, #050505, #fff); }
input[type="range"]::-webkit-slider-thumb { appearance: none; width: 5px; height: 12px; margin-top: -4px; background: #ddd7ce; border: 1px solid; border-color: #fff #777 #777 #fff; }
.range input[type="range"] { height: 11px; }
input.time-range::-webkit-slider-runnable-track { background: linear-gradient(90deg, #f1f5ed 0%, #95bfd0 25%, #6d82cc 55%, #3f508d 75%, #151832 100%); }
input.date-range::-webkit-slider-runnable-track { background: linear-gradient(90deg, #fff9df 0%, #e7b440 30%, #d66731 50%, #bd1f28 70%, #f4dfd9 92%, #fff 100%); }
.ticks { height: 10px; display: flex; justify-content: space-between; line-height: 10px; font-size: 9px; }
.months { padding: 0 2px 0 5px; }
.spin { display: flex; width: 60px; height: 19px; }
.spin input { flex: 1; min-width: 0; width: 46px; padding: 0 0 1px 1px; background: #fff; border: 1px solid; border-color: #66635e #eee #eee #66635e; }
.spin div { display: grid; grid-template-rows: 1fr 1fr; width: 13px; flex: none; }
.spin button { display: grid; place-items: center; border: 1px solid; border-color: #fff #777 #777 #fff; background: #dedbd2; }
.spin button::before { content: ""; border: 2px solid transparent; border-bottom: 3px solid #111; border-top: 0; }
.spin button.down::before { border-top: 3px solid #111; border-bottom: 0; }
.time-row .spin { width: 61px; }
.time-row .spin input { padding-left: 0; }
.time-row select { height: 20px; width: 60px; }
.levels { margin-top: 5px; border-top: 1px solid #aaa79f; border-bottom: 1px solid #aaa79f; padding: 5px 0 7px; }
.level-row { height: 26px; display: grid; grid-template-columns: 38px minmax(0, 1fr) 65px; align-items: center; }
.level-row .spin { width: 65px; }
.sun { height: 27px; border-bottom: 1px solid #aaa79f; display: grid; align-items: center; padding-left: 53px; }
.shadow-panel label { line-height: 14px; }
.sun label, .display label { display: flex; gap: 3px; align-items: center; }
input[type="checkbox"] { appearance: none; width: 12px; height: 12px; margin: 0; background: #fff; border: 1px solid; border-color: #66635e #ddd #ddd #66635e; display: grid; place-items: center; }
input[type="checkbox"]:checked::before { content: ""; width: 7px; height: 4px; border-left: 2px solid #111; border-bottom: 2px solid #111; transform: rotate(-45deg); }
.display { border: 0; margin: 0; padding: 0 0 0 53px; display: grid; grid-auto-rows: 16px; }
.display legend { height: 20px; margin-left: -53px; padding: 5px 0 0; }
.status { height: 25px; flex: none; display: flex; align-items: center; padding: 0 2px 0 3px; border-top: 1px solid #eee; }
.status svg { width: 14px; height: 14px; margin-right: 12px; }
.status p { padding-left: 6px; }
.status label { margin-left: auto; margin-right: 5px; }
.status input { width: 190px; height: 17px; border: 1px solid; border-color: #aaa #fff #fff #aaa; background: #e2dfd7; }
.watermarks { position: fixed; inset: 0; width: 100%; height: 100%; pointer-events: none; overflow: hidden; }
.faint { opacity: .2; fill: #777977; stroke: #777977; stroke-width: 6px; stroke-linejoin: round; }
.face { fill: #dfe1dd; stroke: #dfe1dd; stroke-width: 3px; }
#marks { text-anchor: middle; dominant-baseline: central; }
.latin { font: bold 54px "DejaVu Serif", serif; }
.cjk { font: bold 62px "Noto Sans CJK SC", sans-serif; }
.site { font: 600 37px "Noto Sans", sans-serif; text-anchor: middle; fill: rgba(135, 135, 133, .35); }
.brand { font: bold 34px "Noto Sans CJK SC", sans-serif; fill: url(#silver); stroke: rgba(140, 142, 141, .45); stroke-width: 1px; }
```
